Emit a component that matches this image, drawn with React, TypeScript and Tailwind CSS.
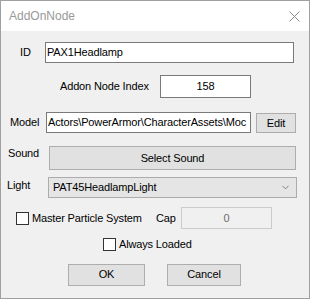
import { ChevronDown } from 'lucide-react';

export default function App() {
    return (
        <div
            className="w-[310px] h-[299px] border border-[#a0a0a0] bg-[#f0f0f0] flex flex-col text-[11px] tracking-[-0.15px] text-black"
            style={{ fontFamily: '"Liberation Sans", Arial, sans-serif' }}
        >
            {/* title bar */}
            <div className="h-[30px] bg-white flex items-center justify-between pl-[8px] pr-[9px] tracking-normal">
                <span className="text-[12px] text-[#999999]">AddOnNode</span>
                <svg width="11" height="11" viewBox="0 0 11 11" className="text-[#8c8c8c]">
                    <path d="M0.5 0.5 L10.5 10.5 M10.5 0.5 L0.5 10.5" stroke="currentColor" strokeWidth="1" />
                </svg>
            </div>

            {/* ID */}
            <div className="flex items-center mt-[11px] pl-[19px]">
                <span className="w-[25px]">ID</span>
                <div className="w-[249px] h-[21px] bg-white border border-[#7a7a7a] flex items-center pl-[1px]">
                    PAX1Headlamp
                </div>
            </div>

            {/* index */}
            <div className="flex items-center mt-[12px] pl-[59px]">
                <span className="w-[100px]">Addon Node Index</span>
                <div className="w-[91px] h-[23px] bg-white border border-[#7a7a7a] flex items-center justify-center">
                    158
                </div>
            </div>

            {/* model */}
            <div className="flex items-center mt-[14px] pl-[9px]">
                <span className="w-[36px]">Model</span>
                <div className="w-[205px] h-[21px] bg-white border border-[#7a7a7a] flex items-center pl-[1px] overflow-hidden whitespace-nowrap">
                    Actors\PowerArmor\CharacterAssets\Moc
                </div>
                <button className="ml-[5px] w-[40px] h-[20px] mt-[1px] bg-[#e1e1e1] border border-[#adadad] flex items-center justify-center">
                    Edit
                </button>
            </div>

            {/* sound */}
            <div className="flex items-start mt-[13px] pl-[7px]">
                <span className="w-[41px] leading-[13px] pt-[1px]">Sound</span>
                <button className="w-[247px] h-[24px] bg-[#e1e1e1] border border-[#adadad] flex items-center justify-center">
                    Select Sound
                </button>
            </div>

            {/* light */}
            <div className="flex items-start mt-[7px] pl-[6px]">
                <span className="w-[41px] leading-[13px] pt-[2px]">Light</span>
                <div className="w-[249px] h-[21px] bg-[#e5e5e5] border border-[#acacac] flex items-center justify-between pl-[4px] pr-[5px]">
                    <span>PAT45HeadlampLight</span>
                    <ChevronDown size={11} strokeWidth={1.5} className="text-[#555555]" />
                </div>
            </div>

            {/* master particle / cap */}
            <div className="flex items-center mt-[9px] pl-[15px]">
                <div className="w-[13px] h-[13px] bg-white border border-[#333333]" />
                <span className="ml-[3px] w-[124px]">Master Particle System</span>
                <span className="w-[25px]">Cap</span>
                <div className="w-[91px] h-[22px] bg-[#f0f0f0] border border-[#cccccc] flex items-center justify-center text-[#6d6d6d]">
                    0
                </div>
            </div>

            {/* always loaded */}
            <div className="flex items-center mt-[7px] pl-[102px]">
                <div className="w-[13px] h-[13px] bg-white border border-[#333333]" />
                <span className="ml-[3px]">Always Loaded</span>
            </div>

            {/* buttons */}
            <div className="flex items-center mt-[11px] pl-[67px]">
                <button className="w-[77px] h-[22px] bg-[#e1e1e1] border border-[#adadad] flex items-center justify-center">
                    OK
                </button>
                <button className="ml-[22px] w-[74px] h-[22px] bg-[#e1e1e1] border border-[#adadad] flex items-center justify-center">
                    Cancel
                </button>
            </div>
        </div>
    );
}
